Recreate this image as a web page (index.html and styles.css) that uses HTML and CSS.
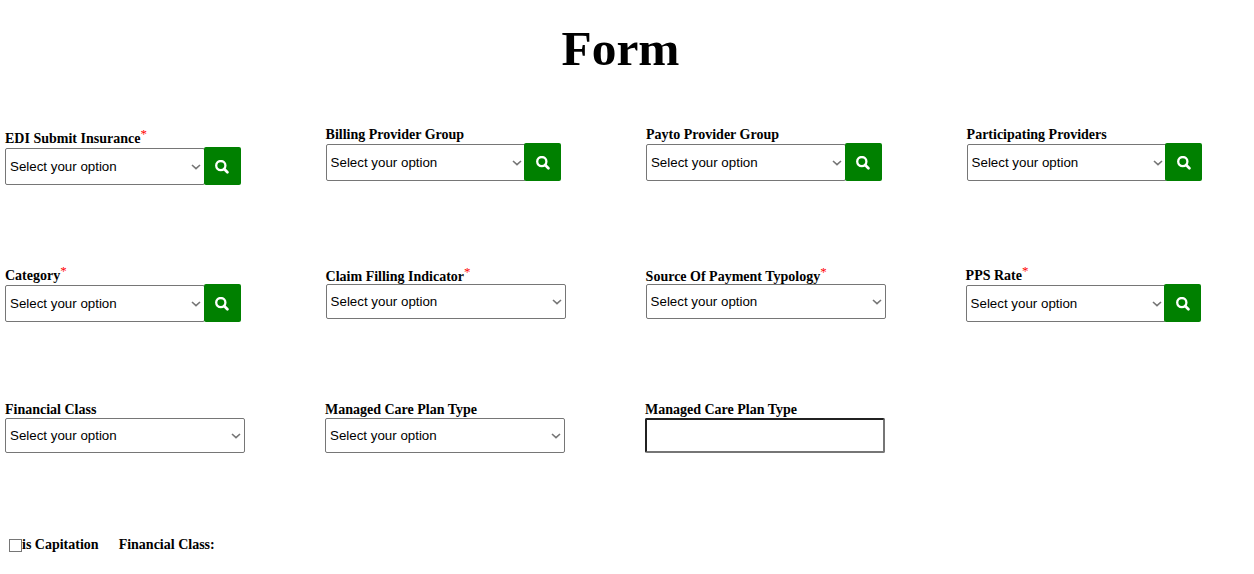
FILE: index.html
```html
<!DOCTYPE html>
<html lang="en">
<head>
<meta charset="utf-8">
<title>Form</title>
<link rel="stylesheet" href="styles.css">
</head>
<body>
<svg width="0" height="0" class="defs"><symbol id="search" viewBox="0 0 14 14"><circle cx="5.8" cy="5.6" r="4.6" fill="none" stroke="#fff" stroke-width="2.3"/><path d="M9.2 9 12.4 12.2" stroke="#fff" stroke-width="2.7" stroke-linecap="round"/></symbol></svg>
<h1 class="title">Form</h1>
<form>
<div class="row row-one">
  <div class="field lowered"><label class="label">EDI Submit Insurance<sup class="req">*</sup></label><div class="group"><select class="select"><option>Select your option</option></select><button class="btn" type="button"><svg class="icon"><use href="#search"/></svg></button></div></div>
  <div class="field"><label class="label">Billing Provider Group</label><div class="group"><select class="select"><option>Select your option</option></select><button class="btn" type="button"><svg class="icon"><use href="#search"/></svg></button></div></div>
  <div class="field"><label class="label">Payto Provider Group</label><div class="group"><select class="select"><option>Select your option</option></select><button class="btn" type="button"><svg class="icon"><use href="#search"/></svg></button></div></div>
  <div class="field"><label class="label">Participating Providers</label><div class="group"><select class="select"><option>Select your option</option></select><button class="btn" type="button"><svg class="icon"><use href="#search"/></svg></button></div></div>
</div>
<div class="row row-two">
  <div class="field"><label class="label">Category<sup class="req">*</sup></label><div class="group"><select class="select"><option>Select your option</option></select><button class="btn" type="button"><svg class="icon"><use href="#search"/></svg></button></div></div>
  <div class="field tight"><label class="label">Claim Filling Indicator<sup class="req">*</sup></label><select class="select wide"><option>Select your option</option></select></div>
  <div class="field tight"><label class="label">Source Of Payment Typology<sup class="req">*</sup></label><select class="select wide"><option>Select your option</option></select></div>
  <div class="field"><label class="label">PPS Rate<sup class="req">*</sup></label><div class="group"><select class="select"><option>Select your option</option></select><button class="btn" type="button"><svg class="icon"><use href="#search"/></svg></button></div></div>
</div>
<div class="row row-three">
  <div class="field"><label class="label">Financial Class</label><select class="select wide"><option>Select your option</option></select></div>
  <div class="field"><label class="label">Managed Care Plan Type</label><select class="select wide"><option>Select your option</option></select></div>
  <div class="field"><label class="label">Managed Care Plan Type</label><input class="text" type="text"></div>
</div>
<div class="checks"><input class="check" type="checkbox"><label class="label">is Capitation</label><span class="label next">Financial Class:</span></div>
</form>
</body>
</html>
```
FILE: styles.css
```css
* { box-sizing: border-box; }
body { margin: 0; height: 574px; overflow: hidden; background: #fff; color: #000; font-family: "Liberation Serif", "Times New Roman", serif; }
.defs { display: block; }
.title { margin: 0; padding: 20px 13px 0 0; height: 126px; text-align: center; font-size: 49.4px; line-height: 57px; }
.row { display: grid; align-items: start; padding-left: 5px; }
.row-one { grid-template-columns: 320.6px 320.4px 320.6px 240px; height: 141px; }
.row-two { grid-template-columns: 320.6px 320px 320px 240px; height: 134px; }
.row-three { grid-template-columns: 320px 320px 240px; height: 135px; }
.field { display: flex; flex-direction: column; }
.lowered { padding-top: 4px; }
.label { display: block; height: 17px; font-size: 14px; font-weight: bold; line-height: 17px; white-space: nowrap; }
.tight .label { padding-top: 1px; }
.req { color: red; font-size: 13px; font-weight: normal; line-height: 0; vertical-align: 5px; }
.group { display: flex; align-items: flex-end; height: 38px; }
.select {
  width: 200px; height: 37px; margin: 0; padding: 0 4px;
  border: 1px solid #767676; border-radius: 2px;
  appearance: none; background-color: #fff;
  background-image: url("data:image/svg+xml,%3Csvg xmlns='http://www.w3.org/2000/svg' width='10' height='6'%3E%3Cpath d='M1 1 5 4.6 9 1' fill='none' stroke='%23767676' stroke-width='1.6'/%3E%3C/svg%3E");
  background-repeat: no-repeat; background-position: right 3px center;
  color: #000; font-family: "Liberation Sans", Arial, sans-serif; font-size: 13.333px;
}
.wide { width: 240px; height: 35px; }
.btn { display: flex; align-items: center; justify-content: center; width: 37px; height: 38px; margin-left: -1.2px; padding: 1px 0 0; border: 0; border-radius: 2px; background: green; }
.icon { width: 14px; height: 14px; }
.text { width: 240px; height: 35px; padding: 1px 2px; border: 2px inset #767676; border-radius: 2px; }
.checks { display: flex; align-items: flex-start; padding-left: 9px; }
.check { appearance: none; width: 13px; height: 13px; margin: 3px 0 0; border: 1px solid #767676; background: #fff; }
.next { margin-left: 20px; }
```
